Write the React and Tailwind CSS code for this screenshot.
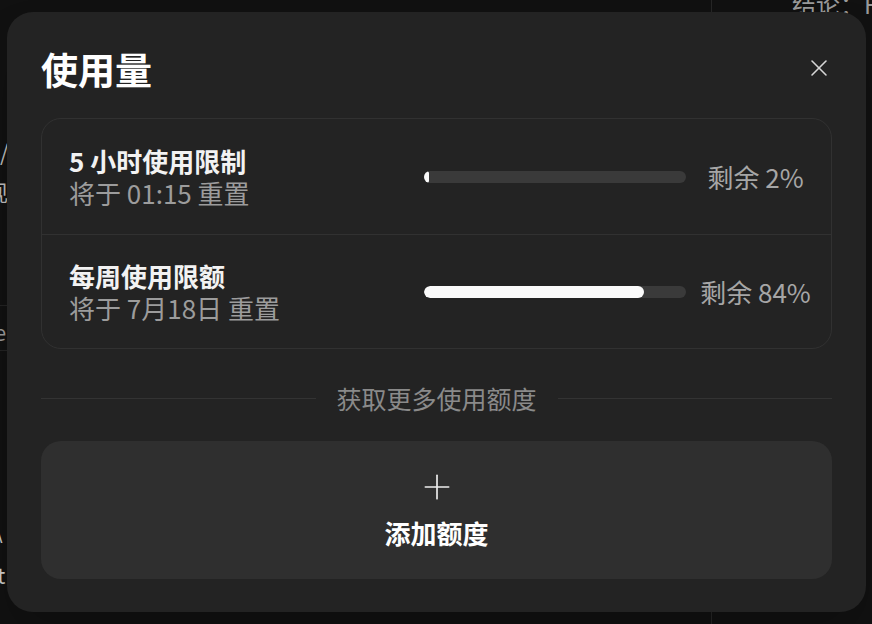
import { X, Plus } from 'lucide-react'

const FONT = { fontFamily: '"Noto Sans CJK SC", "Noto Sans", sans-serif' }

const LIMITS = [
  { title: '5 小时使用限制', reset: '将于 01:15 重置', used: 2, label: '剩余 2%' },
  { title: '每周使用限额', reset: '将于 7月18日 重置', used: 84, label: '剩余 84%' },
]

function LimitRow({ item, last }) {
  return (
    <div className={`flex items-center pl-[27px] pr-[6px] ${last ? 'h-[113px]' : 'h-[116px] border-b border-[#313131]'}`}>
      <div className="flex-1 flex flex-col">
        <span className="text-[26px] leading-[32px] font-semibold text-[#f2f2f2]">{item.title}</span>
        <span className="text-[26px] leading-[32px] text-[#9c9c9c]">{item.reset}</span>
      </div>
      <div className="w-[262px] h-[12px] rounded-full bg-[#3a3a3a] overflow-hidden">
        <div className="h-full rounded-full bg-[#fafafa]" style={{ width: `${item.used}%` }} />
      </div>
      <div className="w-[139px] text-center text-[26px] leading-[32px] text-[#a6a6a6]">{item.label}</div>
    </div>
  )
}

export default function App() {
  return (
    <div className="relative w-[872px] h-[624px] overflow-hidden bg-[#111111] text-white" style={FONT}>
      {/* page behind the dialog */}
      <div className="absolute inset-0 flex">
        <div className="w-[711px] relative">
          <div className="absolute left-0 top-[140px] text-[22px] text-[#bbbbbb] leading-none">/</div>
          <div className="absolute -left-[14px] top-[180px] text-[22px] text-[#bbbbbb] leading-none">现</div>
          <div className="absolute left-0 top-[305px] w-[20px] h-px bg-[#232323]" />
          <div className="absolute -left-[6px] top-[320px] text-[22px] text-[#999999] leading-none">e</div>
          <div className="absolute left-0 top-[350px] w-[20px] h-px bg-[#232323]" />
          <div className="absolute -left-[6px] top-[518px] text-[22px] text-[#cccccc] leading-none">\</div>
          <div className="absolute -left-[3px] top-[563px] text-[22px] text-[#cccccc] leading-none">t</div>
        </div>
        <div className="flex-1 border-l border-[#262626] relative">
          <div className="absolute left-[80px] -top-[14px] text-[24px] text-[#9a9a9a] whitespace-nowrap">结论：F</div>
        </div>
      </div>

      {/* usage dialog */}
      <div className="absolute left-[7px] top-[12px] w-[859px] h-[600px] rounded-[26px] bg-[#232323] pl-[34px] pr-[34px] pt-[33px] flex flex-col shadow-2xl">
        <div className="flex items-center justify-between h-[48px]">
          <h2 className="text-[37px] leading-[48px] font-bold text-white">使用量</h2>
          <button className="w-[28px] h-[28px] -mr-[1px] -mt-[2px] flex items-center justify-center text-[#d6d6d6]">
            <X size={28} strokeWidth={1.3} />
          </button>
        </div>

        <div className="mt-[25px] rounded-[20px] border border-[#313131]">
          {LIMITS.map((item, i) => (
            <LimitRow key={item.title} item={item} last={i === LIMITS.length - 1} />
          ))}
        </div>

        <div className="mt-[33px] flex items-center gap-[21px]">
          <div className="flex-1 h-px bg-[#333333]" />
          <span className="text-[25px] leading-[32px] text-[#8a8a8a]">获取更多使用额度</span>
          <div className="flex-1 h-px bg-[#333333]" />
        </div>

        <button className="mt-[27px] h-[138px] rounded-[20px] bg-[#2f2f2f] flex flex-col items-center justify-center gap-[10px] pb-[4px]">
          <Plus size={40} strokeWidth={1} className="text-[#eeeeee]" />
          <span className="text-[26px] leading-[32px] font-bold text-white">添加额度</span>
        </button>
      </div>
    </div>
  )
}
